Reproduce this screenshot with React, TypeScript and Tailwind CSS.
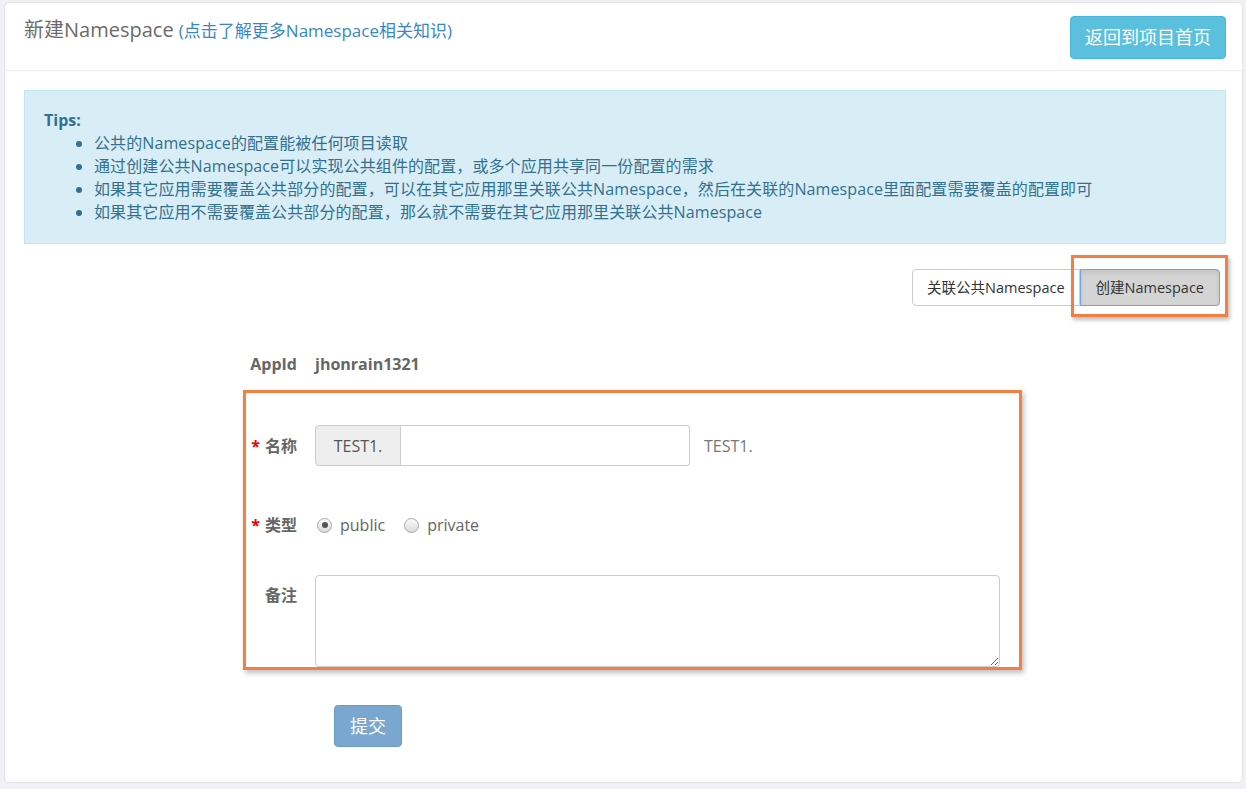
import React from 'react'

const font = { fontFamily: '"Open Sans", "Noto Sans CJK SC", sans-serif' }

function Radio({ checked, label }: { checked?: boolean; label: string }) {
  return (
    <label className='flex items-center gap-[8px] cursor-pointer'>
      <span className='w-[15px] h-[15px] rounded-full border border-[#a9a9a9] bg-gradient-to-b from-[#fafafa] to-[#dcdcdc] flex items-center justify-center'>
        {checked && <span className='w-[6px] h-[6px] rounded-full bg-[#555]' />}
      </span>
      <span className='text-[16px] text-[#666]'>{label}</span>
    </label>
  )
}

export default function App() {
  const tips = [
    '公共的Namespace的配置能被任何项目读取',
    '通过创建公共Namespace可以实现公共组件的配置，或多个应用共享同一份配置的需求',
    '如果其它应用需要覆盖公共部分的配置，可以在其它应用那里关联公共Namespace，然后在关联的Namespace里面配置需要覆盖的配置即可',
    '如果其它应用不需要覆盖公共部分的配置，那么就不需要在其它应用那里关联公共Namespace',
  ]

  return (
    <div className='min-h-[789px] bg-[#f0f0f5] pt-[2px] pl-[4px]' style={font}>
      <div className='w-[1239px] h-[781px] bg-white border border-[#e3e3ea] rounded-[5px]'>

        {/* header */}
        <div className='h-[68px] border-b border-[#ececf2] flex justify-between items-start pl-[19px] pr-[16px] pt-[12px]'>
          <h1 className='text-[20px] leading-[30px] text-[#6b6b6b]'>
            新建Namespace <a className='text-[17px] text-[#3a86c8] cursor-pointer'>(点击了解更多Namespace相关知识)</a>
          </h1>
          <button className='mt-[1px] h-[43px] px-[14px] rounded-[4px] bg-[#5bc0de] border border-[#46b8da] text-white text-[18px]'>
            返回到项目首页
          </button>
        </div>

        <div className='px-[19px]'>
          {/* tips */}
          <div className='mt-[19px] w-[1202px] h-[154px] bg-[#d9edf7] border border-[#bce8f1] text-[#31708f] pt-[18px] pl-[19px]'>
            <div className='text-[16px] font-bold leading-[23px]'>Tips:</div>
            <ul className='list-disc pl-[50px] text-[16px] leading-[23px] tracking-[0.1px]'>
              {tips.map((t) => (
                <li key={t}>{t}</li>
              ))}
            </ul>
          </div>

          {/* button group */}
          <div className='flex justify-end mt-[25px] pr-[3px]'>
            <button className='h-[37px] px-[14px] bg-white border border-[#ccc] rounded-l-[4px] text-[14.5px] text-[#333]'>
              关联公共Namespace
            </button>
            <div className='relative'>
              <button className='h-[37px] px-[15px] bg-[#d4d4d4] border border-[#70a0e8] rounded-r-[4px] text-[14.5px] text-[#333] shadow-[inset_0_3px_5px_rgba(0,0,0,0.08)]'>
                创建Namespace
              </button>
              <span className='absolute left-[-9px] right-[-8px] top-[-14px] bottom-[-11px] border-[3px] border-[#f47f45] shadow-[2px_3px_4px_rgba(0,0,0,0.25)] pointer-events-none' />
            </div>
          </div>
        </div>

        {/* form */}
        <div className='ml-[238px] mt-[46px]'>
          <div className='flex items-center pl-[3px] h-[24px]'>
            <div className='w-[51px] text-right text-[16px] font-bold text-[#666]'>AppId</div>
            <div className='ml-[18px] text-[16px] font-bold text-[#666]'>jhonrain1321</div>
          </div>

          <div className='mt-[14px] w-[779px] h-[280px] border-[3px] border-[#f47f45] shadow-[2px_3px_5px_rgba(0,0,0,0.25)] pt-[32px]'>
            <div className='flex items-center'>
              <div className='w-[51px] text-right text-[16px] font-bold text-[#666] whitespace-nowrap'>
                <span className='text-[#e00] mr-[5px]'>*</span>名称
              </div>
              <div className='ml-[18px] flex h-[41px]'>
                <span className='w-[86px] flex items-center justify-center bg-[#eee] border border-[#ccc] rounded-l-[4px] text-[16px] text-[#555]'>
                  TEST1.
                </span>
                <input className='w-[289px] border border-l-0 border-[#ccc] rounded-r-[4px] outline-none px-[12px]' />
              </div>
              <span className='ml-[14px] text-[16px] text-[#777]'>TEST1.</span>
            </div>

            <div className='flex items-center mt-[46px] h-[26px]'>
              <div className='w-[51px] text-right text-[16px] font-bold text-[#666] whitespace-nowrap'>
                <span className='text-[#e00] mr-[5px]'>*</span>类型
              </div>
              <div className='ml-[20px] flex items-center gap-[19px]'>
                <Radio checked label='public' />
                <Radio label='private' />
              </div>
            </div>

            <div className='flex items-start mt-[37px]'>
              <div className='w-[51px] text-right text-[16px] font-bold text-[#666] pt-[8px]'>备注</div>
              <textarea className='ml-[18px] w-[685px] h-[92px] border border-[#ccc] rounded-[4px] outline-none p-[8px]' />
            </div>
          </div>

          <button className='ml-[91px] mt-[35px] w-[68px] h-[42px] rounded-[4px] bg-[#7aa7d0] border border-[#6b9cc9] text-white text-[18px]'>
            提交
          </button>
        </div>
      </div>
    </div>
  )
}
